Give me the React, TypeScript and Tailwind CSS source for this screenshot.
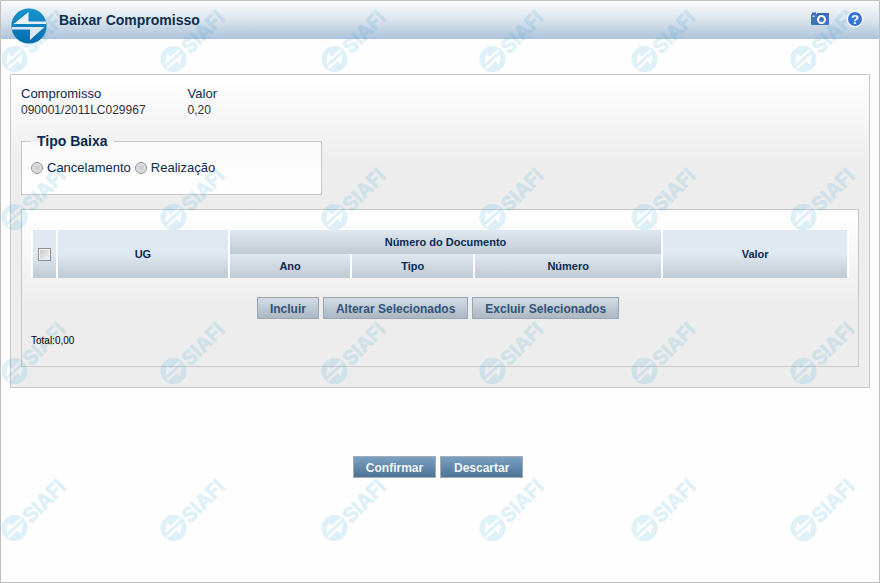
import { useState } from "react";

type TipoBaixa = "" | "cancelamento" | "realizacao";

const WATERMARKS = Array.from({ length: 24 }, (_, i) => i);

const smallButton =
    "h-[22px] cursor-pointer border border-[#9ba6b1] bg-linear-to-b from-[#d3dce4] to-[#abb7c3] px-3 pt-px text-xs font-bold text-[#2f5379]";
const mainButton =
    "h-[22px] min-w-[83px] cursor-pointer border border-[#a4acb4] bg-linear-to-b from-[#7ba0c3] to-[#4d7395] px-3 pt-px text-xs font-bold text-[#f2f7fb]";
const radio =
    "size-3 appearance-none rounded-full border border-[#8e8f8f] bg-radial from-[#c4c8cc] to-[#f2f2f2] checked:from-[#1c5180]";

const tallHead = "bg-linear-to-b from-[#e0e9f1] from-50% to-[#bfcad4] font-bold";
const shortHead = "h-6 bg-linear-to-b from-[#e0e9f1] to-[#c0cad3] font-bold";

function Logo() {
    return (
        <svg viewBox="0 0 36 36" className="size-9 shrink-0" aria-hidden="true">
            <defs>
                <linearGradient id="logo" x1="0" y1="0" x2="0" y2="1">
                    <stop offset="0" stopColor="#1795cf" />
                    <stop offset="1" stopColor="#006cae" />
                </linearGradient>
            </defs>
            <circle cx="18" cy="18" r="17.6" fill="url(#logo)" />
            <path d="M17.5 4v9.500H35v2.500H2.500Z" fill="#e9eff6" />
            <path d="M19 32V21.500H1v-2.500H33.500Z" fill="#dde7f1" />
        </svg>
    );
}

function Watermark() {
    return (
        <svg viewBox="0 0 78 78" className="size-[78px]">
            <g fill="#0090d0" opacity="0.12">
                <path
                    transform="translate(13.5 60) rotate(-42) scale(.74) translate(-18 -18)"
                    fillRule="evenodd"
                    d="M18 .4a17.6 17.6 0 1 1 0 35.2a17.6 17.6 0 1 1 0-35.2ZM17 6v7h16v3H5ZM19 30v-7H3v-3h28Z"
                />
                <text
                    transform="translate(30 56) rotate(-45)"
                    fontFamily="Inter, sans-serif"
                    fontWeight="700"
                    fontSize="20"
                    stroke="#0090d0"
                    strokeWidth="0.6"
                >
                    SIAFI
                </text>
            </g>
        </svg>
    );
}

function CameraIcon() {
    return (
        <svg viewBox="0 0 20 14" className="h-3.5 w-5" aria-hidden="true">
            <path d="M2 .5h4v2H2Z" fill="#3768b4" />
            <rect x="1" y="2" width="18" height="11" rx="1" fill="#3f73be" />
            <path d="M7 1h12v2H7Z" fill="#3768b4" />
            <rect x="2.5" y="3.5" width="2" height="1.5" fill="#dce8f7" />
            <circle cx="11.5" cy="7.5" r="3.5" fill="#3f73be" stroke="#fff" strokeWidth="2" />
        </svg>
    );
}

function HelpIcon() {
    return (
        <svg viewBox="0 0 18 18" className="size-[18px]" aria-hidden="true">
            <circle cx="9" cy="9" r="8.5" fill="#f4f8fd" />
            <circle cx="9" cy="9" r="7" fill="#3674d6" />
            <text x="9" y="13.5" textAnchor="middle" fontFamily="Liberation Sans, sans-serif" fontWeight="700" fontSize="13" fill="#fff">
                ?
            </text>
        </svg>
    );
}

export default function App() {
    const [tipo, setTipo] = useState<TipoBaixa>("");
    const [allSelected, setAllSelected] = useState(false);

    return (
        <div className="relative min-h-screen overflow-hidden border border-[#c0c0c0] bg-[#fefefe] font-['Liberation_Sans',Arial,sans-serif] text-[#0a2a50]">
            <div
                aria-hidden="true"
                className="pointer-events-none absolute inset-x-0 -top-0.5 grid grid-cols-[159px_161px_158px_152px_159px_78px] grid-rows-[158px_154px_157px_78px]"
            >
                {WATERMARKS.map((i) => (
                    <Watermark key={i} />
                ))}
            </div>

            <header className="h-[38px] bg-linear-to-b from-[#f9fbfc] via-[#dbe4ed] to-[#acc3da] pr-[15px] pl-2.5">
                <div className="relative z-10 flex items-start pt-[7px]">
                    <Logo />
                    <h1 className="mt-0.5 ml-3 flex-1 text-sm font-bold text-[#0b2e50]">Baixar Compromisso</h1>
                    <div className="mt-0.5 flex items-center gap-4">
                        <button type="button" aria-label="Capturar tela" className="cursor-pointer">
                            <CameraIcon />
                        </button>
                        <button type="button" aria-label="Ajuda" className="cursor-pointer">
                            <HelpIcon />
                        </button>
                    </div>
                </div>
            </header>

            <main className="mx-[9px] mt-[35px] border border-[#c8c8c8] bg-linear-to-b from-white to-[#ededed] to-[90px] px-2.5 pt-2.5 pb-5">
                <dl className="relative z-10 flex gap-[42px]">
                    <div>
                        <dt className="text-[13px] leading-[17px]">Compromisso</dt>
                        <dd className="text-xs leading-[17px] text-[#333]">090001/2011LC029967</dd>
                    </div>
                    <div>
                        <dt className="text-[13px] leading-[17px]">Valor</dt>
                        <dd className="text-xs leading-[17px] text-[#333]">0,20</dd>
                    </div>
                </dl>

                <fieldset className="mt-3 h-16 w-[301px] border border-[#c8c8c8] bg-linear-to-b from-[#fafafa] to-white px-[9px]">
                    <legend className="relative z-10 px-1.5 text-sm font-bold">Tipo Baixa</legend>
                    <div className="relative z-10 flex items-center gap-1 pt-[7px] text-[13px]">
                        <label className="flex items-center gap-1">
                            <input
                                type="radio"
                                name="tipo"
                                className={radio}
                                checked={tipo === "cancelamento"}
                                onChange={() => setTipo("cancelamento")}
                            />
                            Cancelamento
                        </label>
                        <label className="flex items-center gap-1">
                            <input
                                type="radio"
                                name="tipo"
                                className={radio}
                                checked={tipo === "realizacao"}
                                onChange={() => setTipo("realizacao")}
                            />
                            Realização
                        </label>
                    </div>
                </fieldset>

                <section className="mt-3.5 border border-[#c8c8c8] bg-linear-to-b from-white to-[#ededed] to-[95px] px-[9px] pt-5 pb-[17px]">
                    <table className="relative z-10 w-full table-fixed border-separate border-spacing-0 text-[11px]">
                        <colgroup>
                            <col className="w-[25px]" />
                            <col className="w-[21%]" />
                            <col className="w-[15%]" />
                            <col className="w-[15%]" />
                            <col className="w-[23%]" />
                            <col />
                        </colgroup>
                        <thead>
                            <tr>
                                <th rowSpan={2} className={`${tallHead} border-l-2 border-white`}>
                                    <input
                                        type="checkbox"
                                        aria-label="Selecionar todos"
                                        className="mx-auto block size-[13px] appearance-none border border-[#8e8f8f] bg-linear-to-br from-[#c5c9cd] to-[#f6f6f6] shadow-[inset_0_0_0_1px_#f4f4f4] checked:from-[#1c5180]"
                                        checked={allSelected}
                                        onChange={(e) => setAllSelected(e.target.checked)}
                                    />
                                </th>
                                <th rowSpan={2} className={`${tallHead} border-l-2 border-white`}>UG</th>
                                <th colSpan={3} className={`${shortHead} border-l-2 border-white`}>Número do Documento</th>
                                <th rowSpan={2} className={`${tallHead} border-x-2 border-white`}>Valor</th>
                            </tr>
                            <tr>
                                <th className={`${shortHead} border-l-2 border-white`}>Ano</th>
                                <th className={`${shortHead} border-l-2 border-white`}>Tipo</th>
                                <th className={`${shortHead} border-l-2 border-white`}>Número</th>
                            </tr>
                        </thead>
                    </table>

                    <div className="relative z-10 mt-[19px] flex justify-center gap-1 pr-1">
                        <button type="button" className={smallButton}>Incluir</button>
                        <button type="button" className={smallButton}>Alterar Selecionados</button>
                        <button type="button" className={smallButton}>Excluir Selecionados</button>
                    </div>

                    <p className="relative z-10 mt-3.5 text-[10px] leading-4 text-black">Total:0,00</p>
                </section>
            </main>

            <div className="relative z-10 mt-[68px] flex justify-center gap-1 pr-1">
                <button type="button" className={mainButton}>Confirmar</button>
                <button type="button" className={mainButton}>Descartar</button>
            </div>
        </div>
    );
}
